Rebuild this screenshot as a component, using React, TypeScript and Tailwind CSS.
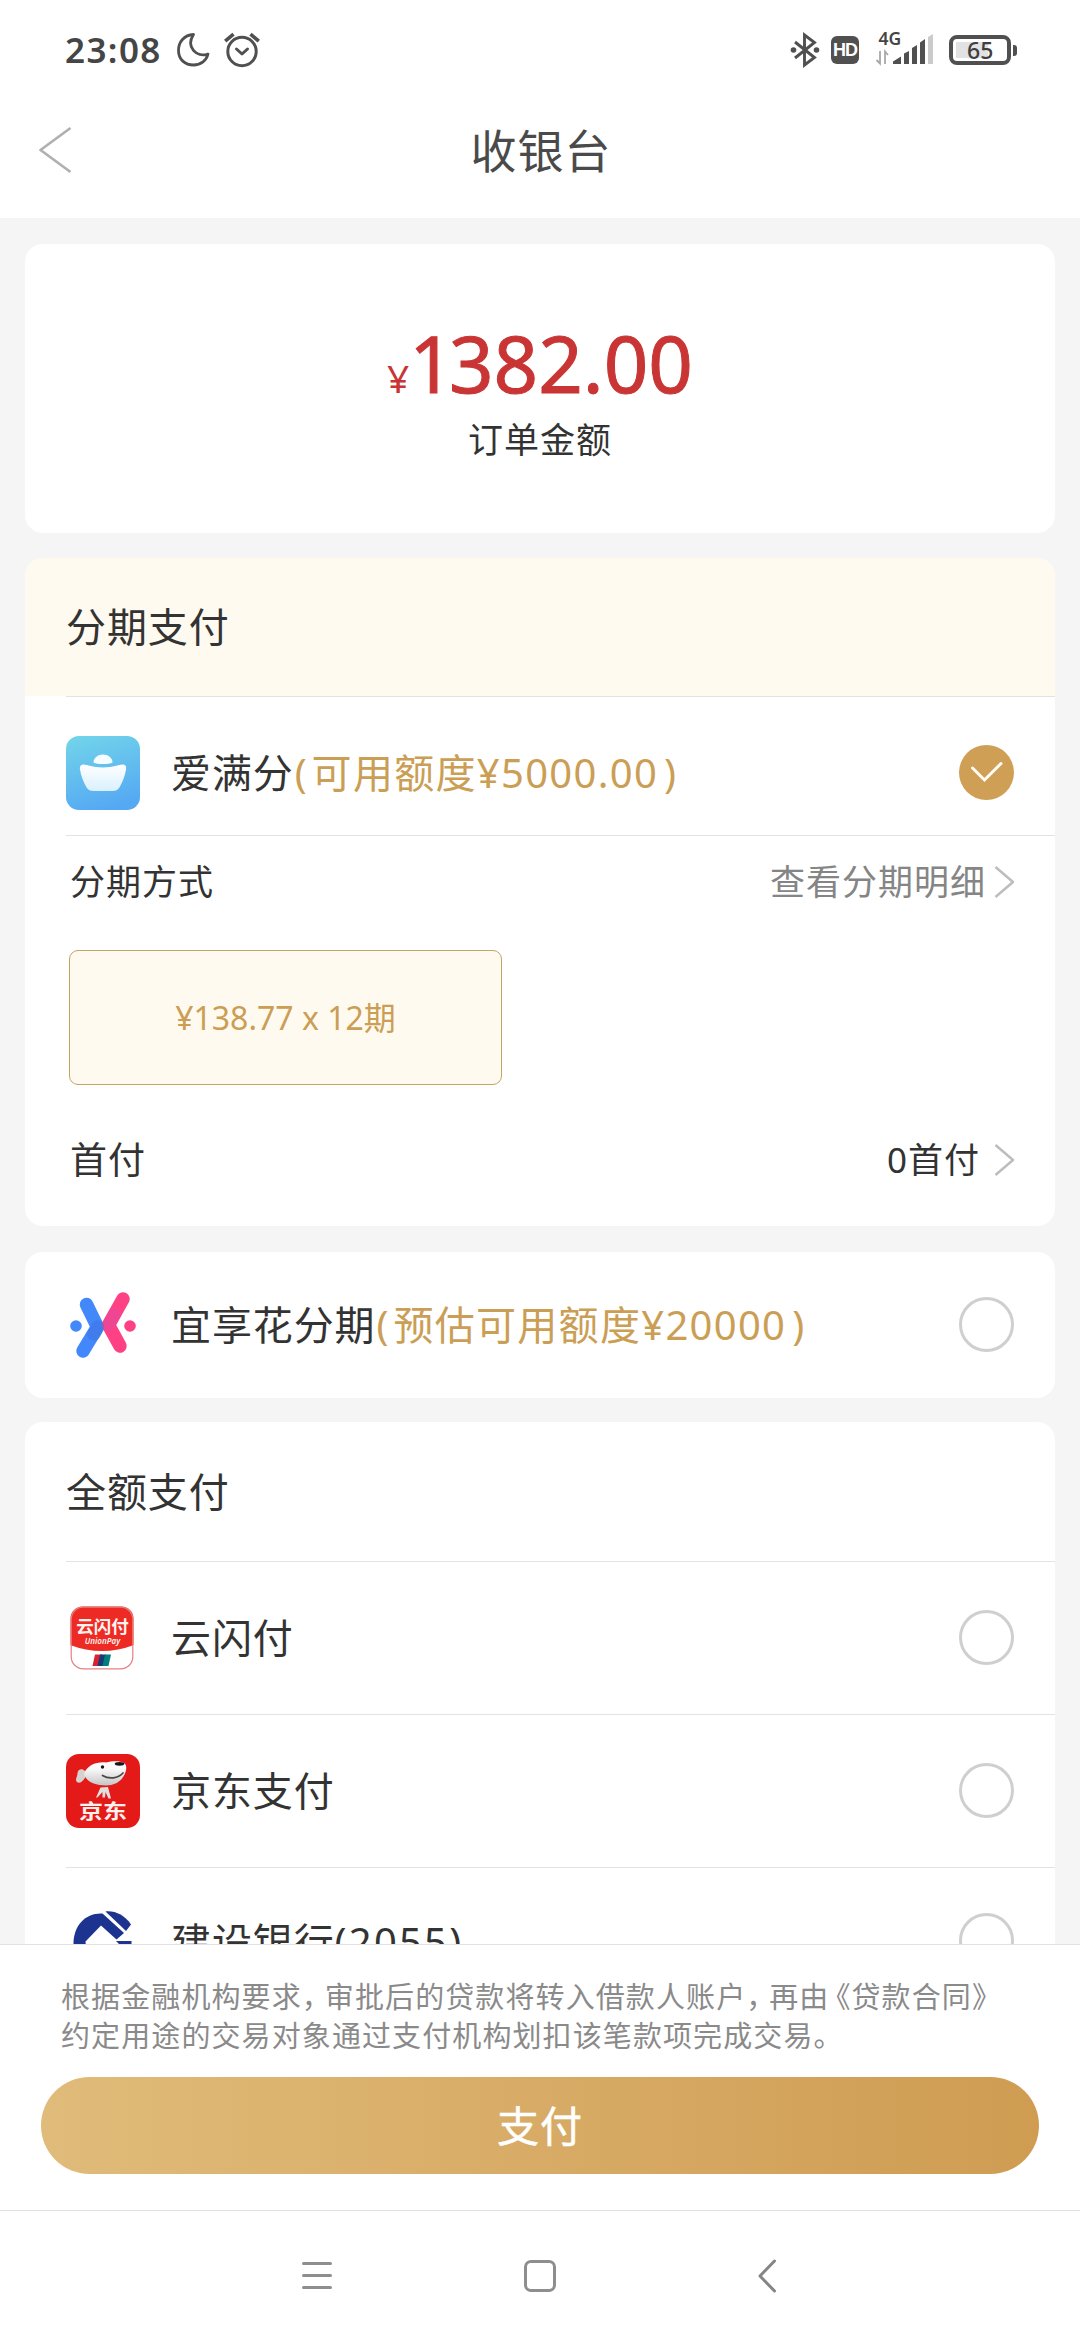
import React from "react";

const FONT = "font-['Noto_Sans','Noto_Sans_CJK_SC',sans-serif]";

function StatusBar() {
  return (
    <div className="flex h-[100px] shrink-0 items-center pl-[65px] pr-[63px] text-[#454545]">
      <span className="w-[99px] text-[35px] leading-[48px] font-semibold tracking-[1.4px] whitespace-nowrap">23:08</span>
      <svg className="ml-[12px]" width="34" height="36" viewBox="0 0 34 36" fill="none" stroke="#505050" strokeWidth="2.8" strokeLinejoin="round">
        <path d="M17.500 2.500C8 3 2.500 10 2.500 18.500C2.500 27.500 9 33 17.500 33C25 33 30.500 28.500 32 22C20.500 26 9.500 15 17.500 2.500Z" />
      </svg>
      <svg className="ml-[13px]" width="38" height="36" viewBox="0 0 38 36" fill="none" stroke="#505050" strokeWidth="3">
        <circle cx="19" cy="19.500" r="14.2" />
        <path d="M13.500 17l5.500 5 5.500-5" strokeLinecap="round" strokeLinejoin="round" />
        <path d="M2.200 9.200L10.500 2.200M35.800 9.200L27.500 2.200" strokeWidth="3.600" />
      </svg>
      <div className="flex-1" />
      <svg width="30" height="36" viewBox="0 0 30 36" fill="none" stroke="#505050" strokeWidth="2.900">
        <path d="M5 10l19.500 15.500-10 7.500V3l10 7.500L5 26" />
        <circle cx="3.500" cy="18" r="2.800" fill="#505050" stroke="none" />
        <circle cx="26.500" cy="18" r="2.800" fill="#505050" stroke="none" />
      </svg>
      <div className="ml-[11px] flex size-[28px] items-center justify-center rounded-[6px] bg-[#505050] font-['Liberation_Sans',sans-serif] text-[18px] leading-none font-bold tracking-[-1px] text-white">
        HD
      </div>
      <svg className="ml-[16px]" width="60" height="56" viewBox="0 -10 60 56">
        <text x="3.500" y="12.500" fontSize="17.500" fontWeight="600" fill="#454545" fontFamily="Noto Sans">4G</text>
        <path d="M5 19v12.500L1.500 28M10 32V19.500l3 3.500" fill="none" stroke="#a8a8a8" strokeWidth="1.800" />
        <path d="M18 32v-2.500l8-5V32ZM29 32V21.500l5-2.500V32ZM37 32V16l5-3V32ZM45 32V10.500L50 7V32Z" fill="#505050" />
        <path d="M53 32V5l5-3V32Z" fill="#cbcbcb" />
      </svg>
      <div className="ml-[14px] flex items-center gap-[2px]">
        <div className="flex h-[30px] w-[62px] rounded-[8px] border-4 border-[#505050] p-[3px]">
          <div className="flex h-[16px] w-[32px] bg-[#e2e2e2] pl-[11px] text-[23px] leading-[17px] font-medium text-[#3f3f3f]">65</div>
        </div>
        <div className="h-[11px] w-[4px] rounded-r-[3px] bg-[#505050]" />
      </div>
    </div>
  );
}

function Chevron() {
  return (
    <svg className="block" width="21" height="32" viewBox="0 0 21 32" fill="none" stroke="#bdbdbd" strokeWidth="2.500">
      <path d="M1.500 1L19 16 1.500 31" strokeLinejoin="round" />
    </svg>
  );
}

function Radio({ on = false }: { on?: boolean }) {
  if (on) {
    return (
      <div className="mt-[-2px] flex size-[55px] items-center justify-center rounded-full bg-[#d09f56]">
        <svg width="32" height="22" viewBox="0 0 32 22" fill="none" stroke="#fffdf5" strokeWidth="3">
          <path d="M1.500 7L13.500 19 30 2.500" strokeLinecap="round" />
        </svg>
      </div>
    );
  }
  return <div className="mt-[-2px] size-[55px] rounded-full border-[3px] border-[#cfcfcf]" />;
}

function IngotLogo() {
  return (
    <svg width="74" height="74" viewBox="0 0 74 74">
      <defs>
        <linearGradient id="sky" x1="0.200" y1="0" x2="0.500" y2="1">
          <stop offset="0" stopColor="#71d3ea" />
          <stop offset="1" stopColor="#55a9f3" />
        </linearGradient>
        <linearGradient id="ingot" x1="0" y1="0" x2="0" y2="1">
          <stop offset="0" stopColor="#ffffff" />
          <stop offset="1" stopColor="#d9f0fd" />
        </linearGradient>
      </defs>
      <rect width="74" height="74" rx="13" fill="url(#sky)" />
      <path d="M27.500 26.500C27.500 22 32 18.500 37 18.500S46.500 22 46.500 26.500C43 28.500 31 28.500 27.500 26.500Z" fill="#f6fdff" />
      <path d="M17.500 28.500C22 28.500 26 31.500 37 31.500S52 28.500 56.500 28.500C60 28.500 60.500 31 60 33.500C59 40 56.500 46 54 50.500C52.500 53.500 50 55 46.500 55H27.500C24 55 21.500 53.500 20 50.500C17.500 46 15 40 14 33.500C13.500 31 14.500 28.500 17.500 28.500Z" fill="url(#ingot)" />
    </svg>
  );
}

function XLogo() {
  return (
    <svg width="74" height="74" viewBox="0 0 74 74" fill="none" strokeLinecap="round" strokeLinejoin="round" strokeWidth="13.500">
      <path d="M20.500 16.500L31.500 39L17 63" stroke="#4388fb" />
      <path d="M57 11L42.500 37L54 58" stroke="#fe4185" />
      <path d="M48 27L42.500 37" stroke="#d34fae" strokeOpacity="0.350" />
      <path d="M31.500 39L28 46" stroke="#3e70dc" strokeOpacity="0.500" />
      <circle cx="10" cy="38" r="5.800" fill="#4388fb" />
      <circle cx="64" cy="38" r="5.800" fill="#fe4185" />
    </svg>
  );
}

function UnionPayLogo() {
  return (
    <svg width="74" height="74" viewBox="0 0 74 74">
      <defs>
        <clipPath id="up"><rect x="4.500" y="5.500" width="63" height="63" rx="12" /></clipPath>
      </defs>
      <rect x="5" y="6" width="62" height="62" rx="12" fill="#ffffff" />
      <path clipPath="url(#up)" d="M4 5H68V44Q36 56 4 44Z" fill="#ee2a24" />
      <rect x="5.200" y="6.200" width="61.600" height="61.600" rx="12" fill="none" stroke="#e58080" strokeWidth="1.200" />
      <text x="36.500" y="31.500" textAnchor="middle" fontSize="17.500" fontWeight="700" fill="#fff3ef" fontFamily="Noto Sans CJK SC">云闪付</text>
      <text x="36.500" y="43" textAnchor="middle" fontSize="8" fontWeight="600" fontStyle="italic" fill="#fff3ef" fontFamily="Noto Sans">UnionPay</text>
      <path d="M29 53.500h7l-2.500 11.500h-7Z" fill="#d8232f" />
      <path d="M34 53.500h6l-2.500 11.500h-6Z" fill="#173a78" />
      <path d="M39 53.500h6l-2.500 11.500h-6Z" fill="#057d7c" />
    </svg>
  );
}

function JDLogo() {
  return (
    <svg width="74" height="74" viewBox="0 0 74 74">
      <defs>
        <linearGradient id="dog" x1="0" y1="0" x2="0" y2="1">
          <stop offset="0.300" stopColor="#fbfbfb" />
          <stop offset="1" stopColor="#c5c5c5" />
        </linearGradient>
      </defs>
      <rect width="74" height="74" rx="13" fill="#e31a17" />
      <path d="M19 17C16 14 12 15 11.500 19C11.500 22.500 9 25 10.500 27.500C13 30.500 17 28 20 22Z" fill="#d6d0ce" />
      <path d="M18 20C21 11 31 7.500 40 8.500C46 7 54 6.500 58 9C61 11 60.500 15 59.500 18C57 26 50 31.500 40 31.500C28 31.500 20 27 18 20Z" fill="url(#dog)" />
      <ellipse cx="53.500" cy="9.800" rx="4.800" ry="1.900" fill="#1b1717" />
      <circle cx="36.500" cy="13" r="1.700" fill="#1b1717" />
      <path d="M36.500 21.500C43 25.500 52 24.500 57 19" fill="none" stroke="#4c4747" strokeWidth="1.700" strokeLinecap="round" />
      <path d="M34.500 33.500L42 33L45 44.500H42.500L39.500 38L39 43.500H36.500L36.500 38L31.500 43.500H30Z" fill="#e2dedd" />
      <g transform="translate(37 65) scale(1.200 1)">
        <text x="0" y="0" textAnchor="middle" fontSize="20" fontWeight="600" fill="#fff0ec" fontFamily="Noto Sans CJK SC">京东</text>
      </g>
    </svg>
  );
}

function CCBLogo() {
  return (
    <svg width="74" height="74" viewBox="0 0 74 74" fill="#1c3390">
      <path d="M7.500 39C7.500 20 20 7.500 36.500 8.500L58 28L50.500 34.500L35 20.500L19.500 36.500C20 49 30 55.500 40 55.500H62C56 63 48 67.500 39 67.500C21 67.500 7.500 56 7.500 39Z" />
      <path d="M39.500 6.500C49 5.500 58.500 10 65 19.500L60 26Z" />
      <path d="M50 36H65.500V41H55Z" />
    </svg>
  );
}

interface PayRowProps {
  logo: React.ReactNode;
  name: React.ReactNode;
  note?: string;
  on?: boolean;
  height: string;
}

function PayRow({ logo, name, note, on, height }: PayRowProps) {
  return (
    <div className={`flex ${height} items-center pr-[41px]`}>
      {logo}
      <div className="ml-[31px] flex flex-1 text-[40px] leading-[56px] tracking-[0.9px] whitespace-nowrap text-[#333333]">
        {name}
        {note && (
          <span className="flex text-[#cb9e55]">
            <span className="pr-[4px] pl-[1px]">(</span>
            <span className="tracking-[1.300px]">{note}</span>
            <span className="pl-[6px]">)</span>
          </span>
        )}
      </div>
      <Radio on={on} />
    </div>
  );
}

export default function App() {
  return (
    <div className={`flex h-[2340px] w-[1080px] flex-col overflow-hidden bg-white ${FONT}`}>
      <StatusBar />
      <header className="flex h-[118px] shrink-0 items-center pl-[38px]">
        <svg className="mt-[-18px]" width="34" height="48" viewBox="0 0 34 48" fill="none" stroke="#b0b0b0" strokeWidth="2.700">
          <path d="M32.500 2L2.500 24L32.500 46" strokeLinejoin="round" />
        </svg>
        <h1 className="mt-[-19px] mr-[70px] flex-1 text-center text-[46px] leading-[60px] tracking-[1px] text-[#4a4a4a]">收银台</h1>
      </header>

      <main className="flex h-[1726px] shrink-0 flex-col overflow-hidden bg-[#f5f5f5] px-[25px] pt-[26px]">
        <section className="flex h-[289px] shrink-0 flex-col items-center rounded-[18px] bg-white pt-[70px]">
          <div className="flex h-[101px] items-baseline text-[#c93534]">
            <span className="text-[39px] leading-[98px]">¥</span>
            <span className="text-[78px] leading-[98px] [-webkit-text-stroke:1px_#c93534]"><span className="tracking-[-5px]">1</span>382.00</span>
          </div>
          <div className="text-[35px] leading-[50px] tracking-[1px] text-[#333333]">订单金额</div>
        </section>

        <section className="mt-[25px] h-[668px] shrink-0 overflow-hidden rounded-[18px] bg-white">
          <div className="flex h-[138px] items-center bg-[#fffaef] pl-[41px] text-[40px] leading-[56px] tracking-[0.9px] text-[#333333]">分期支付</div>
          <div className="ml-[41px] border-y border-[#e3e3e3]">
            <PayRow logo={<IngotLogo />} name="爱满分" note="可用额度¥5000.00" on height="h-[138px] pt-[14px]" />
          </div>
          <div className="flex h-[92px] items-center pr-[40px] pl-[45px] text-[35px] leading-[50px] tracking-[1px] text-[#333333]">
            <span className="flex-1">分期方式</span>
            <span className="mr-[8px] text-[#858585]">查看分期明细</span>
            <Chevron />
          </div>
          <div className="mt-[22px] ml-[44px] flex h-[135px] w-[433px] items-center justify-center rounded-[9px] border border-[#c3a467] bg-[#fffaef] text-[32px] leading-[44px] text-[#cb9e55]">
            ¥138.77 x 12期
          </div>
          <div className="mt-[49px] flex h-[52px] items-center pr-[40px] pl-[45px] leading-[52px] text-[#333333]">
            <span className="flex-1 text-[37px] tracking-[1px]">首付</span>
            <span className="mr-[14px] text-[35px] tracking-[1px]">0首付</span>
            <Chevron />
          </div>
        </section>

        <section className="mt-[26px] h-[146px] shrink-0 rounded-[18px] bg-white pl-[41px]">
          <PayRow logo={<XLogo />} name="宜享花分期" note="预估可用额度¥20000" height="h-[146px]" />
        </section>

        <section className="mt-[24px] h-[700px] shrink-0 rounded-t-[18px] bg-white pl-[41px]">
          <div className="flex h-[139px] items-center text-[40px] leading-[56px] tracking-[0.9px] text-[#333333]">全额支付</div>
          <div className="border-t border-[#e3e3e3]">
            <PayRow logo={<UnionPayLogo />} name="云闪付" height="h-[152px]" />
          </div>
          <div className="border-t border-[#e3e3e3]">
            <PayRow logo={<JDLogo />} name="京东支付" height="h-[152px]" />
          </div>
          <div className="border-t border-[#e3e3e3]">
            <PayRow logo={<CCBLogo />} name={<span>建设银行<span className="tracking-[2.200px]">(2055)</span></span>} height="h-[147px]" />
          </div>
        </section>
      </main>

      <footer className="flex h-[266px] shrink-0 flex-col border-t border-[#e2e2e2] px-[41px] pt-[32px]">
        <p className="pl-[20px] text-[29px] leading-[39px] tracking-[1.100px] whitespace-nowrap text-[#8a8a8a]">
          根据金融机构要求<span className="tracking-[-6px]">，</span>审批后的贷款将转入借款人账户<span className="tracking-[-6px]">，</span>再<span className="tracking-[-7px]">由</span>《贷款合同》
          <br />
          约定用途的交易对象通过支付机构划扣该笔款项完成交易。
        </p>
        <button className="mt-[22px] h-[97px] w-[998px] rounded-full bg-linear-to-r from-[#e0bb79] to-[#cf9c52] text-[42px] leading-[60px] tracking-[1px] text-white [-webkit-text-stroke:0.5px_white]">支付</button>
      </footer>

      <nav className="flex h-[130px] shrink-0 items-center border-t border-[#e2e2e2] pl-[300px]">
        <svg width="34" height="34" viewBox="0 0 34 34" stroke="#8e8e8e" strokeWidth="3" strokeLinecap="round">
          <path d="M3.500 4.500H30.500M3.500 16.500H30.500M3.500 28.500H30.500" />
        </svg>
        <div className="ml-[190px] size-[32px] rounded-[7px] border-[3px] border-[#8e8e8e]" />
        <svg className="ml-[201px]" width="20" height="34" viewBox="0 0 20 34" fill="none" stroke="#858585" strokeWidth="3">
          <path d="M17.500 2L3 17L17.500 32" strokeLinecap="round" strokeLinejoin="round" />
        </svg>
      </nav>
    </div>
  );
}
